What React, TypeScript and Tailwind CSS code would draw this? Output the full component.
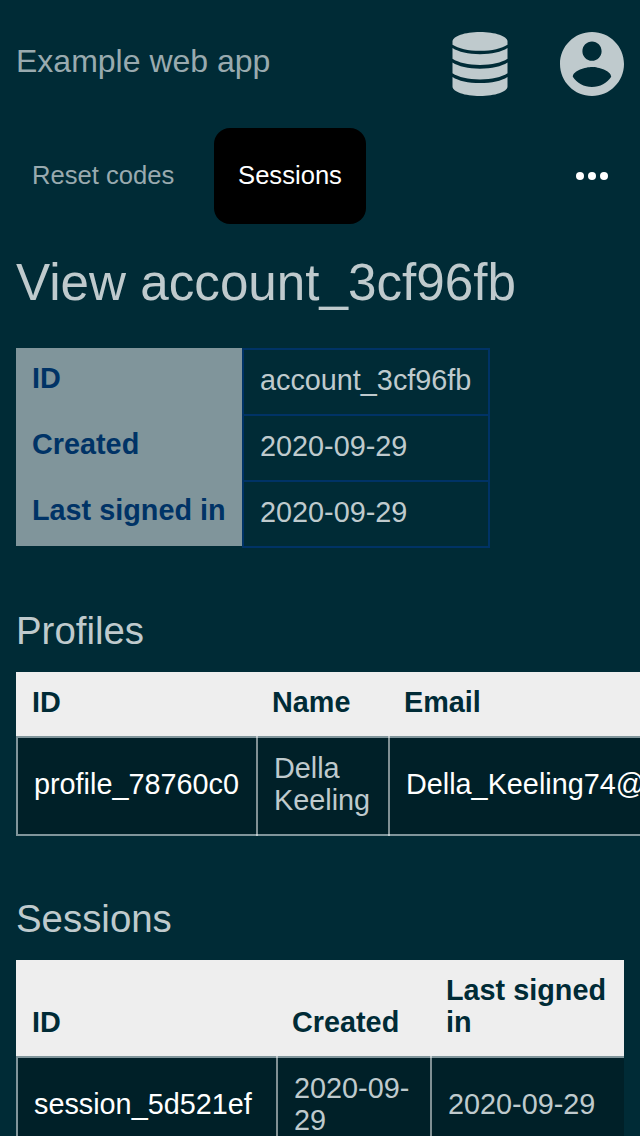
import React from "react";

function DatabaseIcon() {
  return (
    <svg viewBox="0 0 56 64" className="h-16 w-14" fill="currentColor" aria-hidden="true">
      <path d="M.5 9.500C.5 4.200 12.800 0 28 0s27.500 4.200 27.500 9.500v3.200C49.700 16.500 40 18.800 28 18.800S6.300 16.500.5 12.700z" />
      <path d="M.5 16.100c6 3.900 15.700 6.200 27.500 6.200s21.500-2.300 27.500-6.200v10.700C49.500 30.700 39.800 33 28 33S6.500 30.700.5 26.800z" />
      <path d="M.5 30.500c6 3.900 15.700 6.200 27.500 6.200s21.500-2.300 27.500-6.200v10.700c-6 3.900-15.700 6.200-27.500 6.200S6.500 45.100.5 41.200z" />
      <path d="M.5 44.900c6 3.900 15.700 6.200 27.500 6.200s21.500-2.300 27.500-6.200v9.600C55.500 59.800 43.200 64 28 64S.5 59.800.5 54.500z" />
    </svg>
  );
}

function AccountIcon() {
  return (
    <svg viewBox="2 2 20 20" className="size-16" fill="currentColor" aria-hidden="true">
      <path d="M12 2C6.48 2 2 6.48 2 12s4.48 10 10 10 10-4.48 10-10S17.52 2 12 2zm0 3c1.66 0 3 1.34 3 3s-1.34 3-3 3-3-1.34-3-3 1.34-3 3-3zm0 14.2c-2.5 0-4.71-1.28-6-3.22.03-1.99 4-3.08 6-3.08 1.99 0 5.97 1.09 6 3.08-1.29 1.94-3.5 3.22-6 3.22z" />
    </svg>
  );
}

const details = [
  ["ID", "account_3cf96fb"],
  ["Created", "2020-09-29"],
  ["Last signed in", "2020-09-29"],
];

type Column = { title: string; value: string; link?: boolean };

function DataTable({ columns, grid }: { columns: Column[]; grid: string }) {
  return (
    <div className="w-max">
      <div className={`grid items-end bg-[#eeeeee] font-bold text-[#002b36] ${grid}`}>
        {columns.map((c) => (
          <div key={c.title} className="px-4 pt-3.5 pb-[18px]">
            {c.title}
          </div>
        ))}
      </div>
      <div className={`grid border-y-2 border-[#80959b] bg-[#002028] ${grid}`}>
        {columns.map((c, i) => (
          <div
            key={c.title}
            className={`flex items-center border-l-2 px-4 ${
              i ? "-my-0.5 border-white/50 pt-4 pb-5" : "border-[#80959b] pt-3.5 pb-[18px]"
            } ${c.link ? "text-white" : ""}`}
          >
            {c.value}
          </div>
        ))}
      </div>
    </div>
  );
}

export default function App() {
  return (
    <div className="h-[1136px] w-[640px] overflow-hidden bg-[#002b36] px-4 font-['Liberation_Sans',Arial,sans-serif] text-[28.8px] leading-8 text-[#bfcacd]">
      <header className="flex h-32 items-center">
        <div className="flex-1 pb-1.5 text-[32px] text-[#99aaaf]">Example web app</div>
        <div className="mr-[52px]">
          <DatabaseIcon />
        </div>
        <AccountIcon />
      </header>
      <nav className="flex h-24 items-center pr-4 text-[25.6px]">
        <div className="w-[198px] pb-0.5 pl-4 text-[#99aaaf]">Reset codes</div>
        <div className="flex h-24 w-[152px] items-center justify-center rounded-2xl bg-black pb-0.5 text-white">
          Sessions
        </div>
        <div className="ml-auto flex gap-1">
          <span className="size-2 rounded-full bg-white" />
          <span className="size-2 rounded-full bg-white" />
          <span className="size-2 rounded-full bg-white" />
        </div>
      </nav>
      <h1 className="h-[124px] pt-[29px] text-[51.2px] leading-[60px]">View account_3cf96fb</h1>
      <div className="grid h-[200px] w-[474px] grid-cols-[226px_248px]">
        <div className="h-[198px] bg-[#80959b] font-bold text-[#003366]">
          {details.map(([label]) => (
            <div key={label} className="h-[66px] px-4 pt-3.5 whitespace-nowrap">
              {label}
            </div>
          ))}
        </div>
        <div className="border-x-2 border-b-2 border-[#003366]">
          {details.map(([label, value]) => (
            <div key={label} className="h-[66px] border-t-2 border-[#003366] px-4 pt-3.5">
              {value}
            </div>
          ))}
        </div>
      </div>
      <h2 className="h-[124px] pt-[62px] text-[38.4px] leading-[42px]">Profiles</h2>
      <DataTable
        grid="grid-cols-[240px_132px_480px]"
        columns={[
          { title: "ID", value: "profile_78760c0", link: true },
          { title: "Name", value: "Della Keeling" },
          { title: "Email", value: "Della_Keeling74@hotmail.com", link: true },
        ]}
      />
      <h2 className="h-[124px] pt-[62px] text-[38.4px] leading-[42px]">Sessions</h2>
      <DataTable
        grid="grid-cols-[260px_154px_194px]"
        columns={[
          { title: "ID", value: "session_5d521ef", link: true },
          { title: "Created", value: "2020-09-29" },
          { title: "Last signed in", value: "2020-09-29" },
        ]}
      />
    </div>
  );
}
